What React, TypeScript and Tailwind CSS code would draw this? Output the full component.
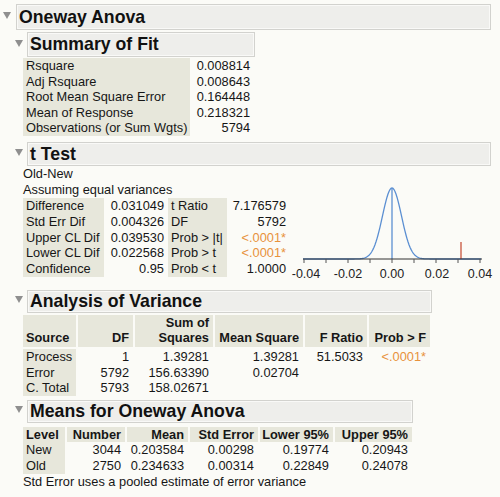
import type { ReactNode } from 'react';

const ORANGE = 'text-[#e8923c]';

function Tri() {
  return (
    <svg width="8" height="7" viewBox="0 0 8 7" className="mb-[3px] shrink-0">
      <polygon points="0,0 8,0 4,7" fill="#8f8f8f" />
    </svg>
  );
}

function Box({ children, className }: { children: ReactNode; className: string }) {
  return (
    <div
      className={`flex items-center border border-[#d2d2ce] bg-[#eeeeeb] pl-[2px] text-[17.7px] font-bold text-[#111] shadow-[inset_0_0_0_1px_#f9f9f7] ${className}`}
    >
      {children}
    </div>
  );
}

function Section({ title, className }: { title: string; className: string }) {
  return (
    <div className="flex items-center gap-[4px] pl-[15px]">
      <Tri />
      <Box className={className}>{title}</Box>
    </div>
  );
}

const summary = [
  ['Rsquare', '0.008814'],
  ['Adj Rsquare', '0.008643'],
  ['Root Mean Square Error', '0.164448'],
  ['Mean of Response', '0.218321'],
  ['Observations (or Sum Wgts)', '5794'],
];

const ttest = [
  ['Difference', '0.031049', 't Ratio', '7.176579', false],
  ['Std Err Dif', '0.004326', 'DF', '5792', false],
  ['Upper CL Dif', '0.039530', 'Prob > |t|', '<.0001*', true],
  ['Lower CL Dif', '0.022568', 'Prob > t', '<.0001*', true],
  ['Confidence', '0.95', 'Prob < t', '1.0000', false],
] as const;

const anova = [
  ['Process', '1', '1.39281', '1.39281', '51.5033', '<.0001*'],
  ['Error', '5792', '156.63390', '0.02704', '', ''],
  ['C. Total', '5793', '158.02671', '', '', ''],
];

const means = [
  ['New', '3044', '0.203584', '0.00298', '0.19774', '0.20943'],
  ['Old', '2750', '0.234633', '0.00314', '0.22849', '0.24078'],
];

function Chart() {
  const zero = 102;
  const base = 93;
  const sigma = 9.5;
  const pts: string[] = [];
  for (let dx = -89; dx <= 89; dx += 1) {
    const y = base - 71 * Math.exp(-(dx * dx) / (2 * sigma * sigma));
    pts.push(`${zero + dx},${y.toFixed(2)}`);
  }
  const ticks = [14, 36, 58, 80, 102, 124, 146, 168, 190];
  const labels: [number, string][] = [
    [16, '-0.04'],
    [58, '-0.02'],
    [102, '0.00'],
    [147, '0.02'],
    [190, '0.04'],
  ];
  return (
    <svg width="205" height="116" viewBox="0 0 205 116" className="ml-[2px] shrink-0">
      <polyline points={pts.join(' ')} fill="none" stroke="#5b8fd2" strokeWidth="1.3" />
      <line x1={zero} y1="22" x2={zero} y2={base} stroke="#5b8fd2" strokeWidth="1.3" />
      <line x1="171" y1="76" x2="171" y2={base} stroke="#c4472d" strokeWidth="1.2" />
      <line x1="13" y1={base} x2="192" y2={base} stroke="#333" strokeWidth="1" />
      {ticks.map(t => (
        <line key={t} x1={t} y1={base} x2={t} y2={base + 4} stroke="#555" strokeWidth="1" />
      ))}
      {labels.map(([x, s]) => (
        <text key={s} x={x} y="112" textAnchor="middle" fontSize="12.5" fill="#222" fontFamily="Liberation Sans, Arial, sans-serif">
          {s}
        </text>
      ))}
    </svg>
  );
}

export default function App() {
  return (
    <div className="h-[497px] w-[500px] overflow-hidden bg-[#fbfbf7] pt-[4px] font-['Liberation_Sans',Arial,sans-serif] text-[12.8px] text-[#161616]">
      <div className="flex items-center gap-[5px] pl-[3px]">
        <Tri />
        <Box className="h-[26px] w-[475px]">Oneway Anova</Box>
      </div>

      {/* Summary of Fit */}
      <div className="mt-[2px]">
        <Section title="Summary of Fit" className="h-[25px] w-[228px]" />
      </div>
      <div className="ml-[23px] mt-[1px] grid w-[230px] grid-cols-[167px_63px] leading-[15.6px]">
        {summary.map(([k, v]) => (
          <div key={k} className="contents">
            <div className="h-[15.6px] bg-[#e7e7db] pl-[3px]">{k}</div>
            <div className="h-[15.6px] pr-[3px] text-right">{v}</div>
          </div>
        ))}
      </div>

      {/* t Test */}
      <div className="mt-[6px]">
        <Section title="t Test" className="h-[24px] w-[464px]" />
      </div>
      <div className="ml-[23px] flex">
        <div className="w-[265px]">
          <div className="h-[16px] leading-[16px]">Old-New</div>
          <div className="h-[16px] leading-[16px]">Assuming equal variances</div>
          <div className="grid grid-cols-[81px_64px_59px_61px] leading-[15.8px]">
            {ttest.map(([a, b, c, d, hot]) => (
              <div key={a} className="contents">
                <div className="h-[15.8px] bg-[#e7e7db] pl-[3px]">{a}</div>
                <div className="h-[15.8px] pr-[4px] text-right">{b}</div>
                <div className="h-[15.8px] bg-[#e7e7db] pl-[3px]">{c}</div>
                <div className={`h-[15.8px] pr-[2px] text-right ${hot ? ORANGE : ''}`}>{d}</div>
              </div>
            ))}
          </div>
        </div>
        <Chart />
      </div>

      {/* Analysis of Variance */}
      <div className="mt-[8px]">
        <Section title="Analysis of Variance" className="h-[23px] w-[405px]" />
      </div>
      <div className="ml-[23px] mt-[2px] grid w-[407px] grid-cols-[53px_55px_78px_88px_62px_61px] gap-x-[2px] leading-[15.6px]">
        {[
          ['Source', ''],
          ['DF', ''],
          ['Sum of', 'Squares'],
          ['Mean Square', ''],
          ['F Ratio', ''],
          ['Prob > F', ''],
        ].map(([l1, l2], i) => (
          <div
            key={l1}
            className={`flex h-[32px] flex-col justify-end bg-[#e7e7db] pb-[1px] font-bold ${i === 0 ? 'pl-[3px]' : 'items-end pr-[4px]'}`}
          >
            <div>{l1}</div>
            {l2 && <div>{l2}</div>}
          </div>
        ))}
        <div className="col-span-6 h-[2px]" />
        {anova.map(row => (
          <div key={row[0]} className="contents">
            <div className="h-[15.6px] bg-[#e7e7db] pl-[3px]">{row[0]}</div>
            {row.slice(1).map((v, i) => (
              <div key={i} className={`h-[15.6px] pr-[4px] text-right ${i === 4 ? ORANGE : ''}`}>
                {v}
              </div>
            ))}
          </div>
        ))}
      </div>

      {/* Means */}
      <div className="mt-[4px]">
        <Section title="Means for Oneway Anova" className="h-[23px] w-[386px]" />
      </div>
      <div className="ml-[23px] mt-[4px] grid w-[389px] grid-cols-[42px_58px_61px_68px_73px_77px] gap-x-[2px] leading-[15.6px]">
        {['Level', 'Number', 'Mean', 'Std Error', 'Lower 95%', 'Upper 95%'].map((h, i) => (
          <div
            key={h}
            className={`h-[15.6px] bg-[#e7e7db] font-bold ${i === 0 ? 'pl-[3px]' : 'pr-[4px] text-right'}`}
          >
            {h}
          </div>
        ))}
        {means.map(row => (
          <div key={row[0]} className="contents">
            <div className="h-[16px] bg-[#e7e7db] pl-[3px] leading-[16px]">{row[0]}</div>
            {row.slice(1).map((v, i) => (
              <div key={i} className="h-[16px] pr-[4px] text-right leading-[16px]">
                {v}
              </div>
            ))}
          </div>
        ))}
      </div>
      <div className="ml-[23px] h-[16px] leading-[16px]">Std Error uses a pooled estimate of error variance</div>
    </div>
  );
}
